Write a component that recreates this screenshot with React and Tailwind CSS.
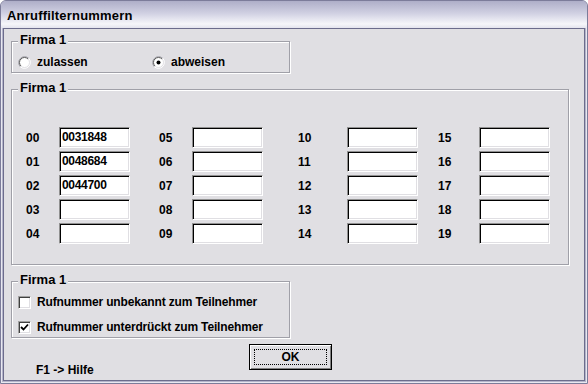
import React from 'react';

const face = 'bg-[#e0dfe3]';

const Radio = ({ checked }) => (
  <svg width="13" height="13" viewBox="0 0 13 13" className="shrink-0">
    <circle cx="6.5" cy="6.5" r="5.5" fill="#fff" />
    <path d="M2.26 10.74 A6 6 0 0 1 10.74 2.26" fill="none" stroke="#a0a0a8" strokeWidth="1" />
    <path d="M2.96 10.04 A5 5 0 0 1 10.04 2.96" fill="none" stroke="#5a5a5a" strokeWidth="1" />
    <path d="M10.74 2.26 A6 6 0 0 1 2.26 10.74" fill="none" stroke="#ffffff" strokeWidth="1" />
    <path d="M10.04 2.96 A5 5 0 0 1 2.96 10.04" fill="none" stroke="#e0dfe3" strokeWidth="1" />
    {checked && <circle cx="6.5" cy="6.5" r="2" fill="#000" />}
  </svg>
);

const Checkbox = ({ checked }) => (
  <div className="w-[13px] h-[13px] shrink-0 bg-white border border-t-[#a0a0a0] border-l-[#a0a0a0] border-b-white border-r-white shadow-[inset_1px_1px_0_#404040,inset_-1px_-1px_0_#e0dfe3] flex items-center justify-center">
    {checked && (
      <svg width="9" height="9" viewBox="0 0 9 9">
        <path d="M1 4 L3.5 6.5 L8 1.5" fill="none" stroke="#000" strokeWidth="1.8" />
      </svg>
    )}
  </div>
);

// etched group box with caption over its top line
const Group = ({ title, className, children }) => (
  <div className={`relative border border-[#a0a0a8] shadow-[inset_1px_1px_0_#fff,1px_1px_0_#fff] ${className}`}>
    <span className={`absolute -top-[10px] left-[6px] px-[2px] ${face} text-[13px] leading-[15px] font-bold`}>
      {title}
    </span>
    {children}
  </div>
);

const Field = ({ value }) => (
  <div className="w-[71px] h-[21px] bg-white border border-t-[#909090] border-l-[#909090] border-b-white border-r-white shadow-[inset_1px_1px_0_#000,inset_-1px_-1px_0_#e0dfe3] pl-[2px] text-[12px] leading-[19px] font-bold tracking-[-0.3px]">
    {value}
  </div>
);

const columns = [
  { label: 'w-[33px]', gap: '' },
  { label: 'w-[33px]', gap: 'ml-[29px]' },
  { label: 'w-[49px]', gap: 'ml-[35px]' },
  { label: 'w-[41px]', gap: 'ml-[20px]' },
];

const values = { '00': '0031848', '01': '0048684', '02': '0044700' };

export default function App() {
  return (
    <div className="w-[588px] h-[384px] flex flex-col bg-[#b4b4ca] border border-[#7c7c9a] rounded-t-[6px] overflow-hidden font-['Liberation_Sans',Arial,sans-serif] text-black shadow-[inset_1px_0_0_#e8e8f0,inset_-1px_0_0_#e8e8f0,inset_0_-1px_0_#e8e8f0]">
      <div className="h-[27px] shrink-0 pl-[6px] pt-[7px] bg-[linear-gradient(to_bottom,#aeaec8_0%,#d0d0e2_45%,#f6f6fa_85%,#e4e4ee_100%)] text-[13px] leading-[15px] font-bold tracking-[0.2px]">
        Anruffilternummern
      </div>
      <div className={`flex-1 mx-[2px] mb-[2px] border border-[#6c6c8c] ${face} pl-[7px] pt-[12px] flex flex-col`}>
        <Group title="Firma 1" className="w-[279px] h-[32px]">
          <div className="flex items-center h-[14px] mt-[13px] pl-[6px] text-[12px] font-bold">
            <div className="w-[134px] flex items-center gap-[6px]">
              <Radio />
              <span>zulassen</span>
            </div>
            <div className="flex items-center gap-[6px]">
              <Radio checked />
              <span>abweisen</span>
            </div>
          </div>
        </Group>

        <Group title="Firma 1" className="mt-[16px] w-[558px] h-[176px]">
          <div className="pt-[37px] pl-[14px] flex flex-col gap-[3px]">
            {[0, 1, 2, 3, 4].map((r) => (
              <div key={r} className="flex items-center">
                {columns.map((c, ci) => {
                  const n = String(ci * 5 + r).padStart(2, '0');
                  return (
                    <div key={ci} className={`flex items-center ${c.gap}`}>
                      <span className={`${c.label} text-[12px] font-bold`}>{n}</span>
                      <Field value={values[n] || ''} />
                    </div>
                  );
                })}
              </div>
            ))}
          </div>
        </Group>

        <Group title="Firma 1" className="mt-[16px] w-[279px] h-[57px]">
          <div className="pt-[12px] pl-[6px] flex flex-col gap-[9px] text-[12px] font-bold tracking-[-0.15px]">
            <div className="flex items-center h-[16px] gap-[6px]">
              <Checkbox />
              <span>Rufnummer unbekannt zum Teilnehmer</span>
            </div>
            <div className="flex items-center h-[16px] gap-[6px]">
              <Checkbox checked />
              <span>Rufnummer unterdrückt zum Teilnehmer</span>
            </div>
          </div>
        </Group>

        <div className="flex mt-[6px]">
          <div className="w-[238px] pl-[25px] pt-[19px] text-[12px] leading-[14px] font-bold">F1 -&gt; Hilfe</div>
          <button className="w-[83px] h-[26px] border border-black bg-[#e0dfe3] shadow-[inset_1px_1px_0_#fff,inset_-1px_-1px_0_#808080] p-[4px]">
            <div className="w-full h-full border border-dotted border-black flex items-center justify-center text-[12px] font-bold">
              OK
            </div>
          </button>
        </div>
      </div>
    </div>
  );
}
